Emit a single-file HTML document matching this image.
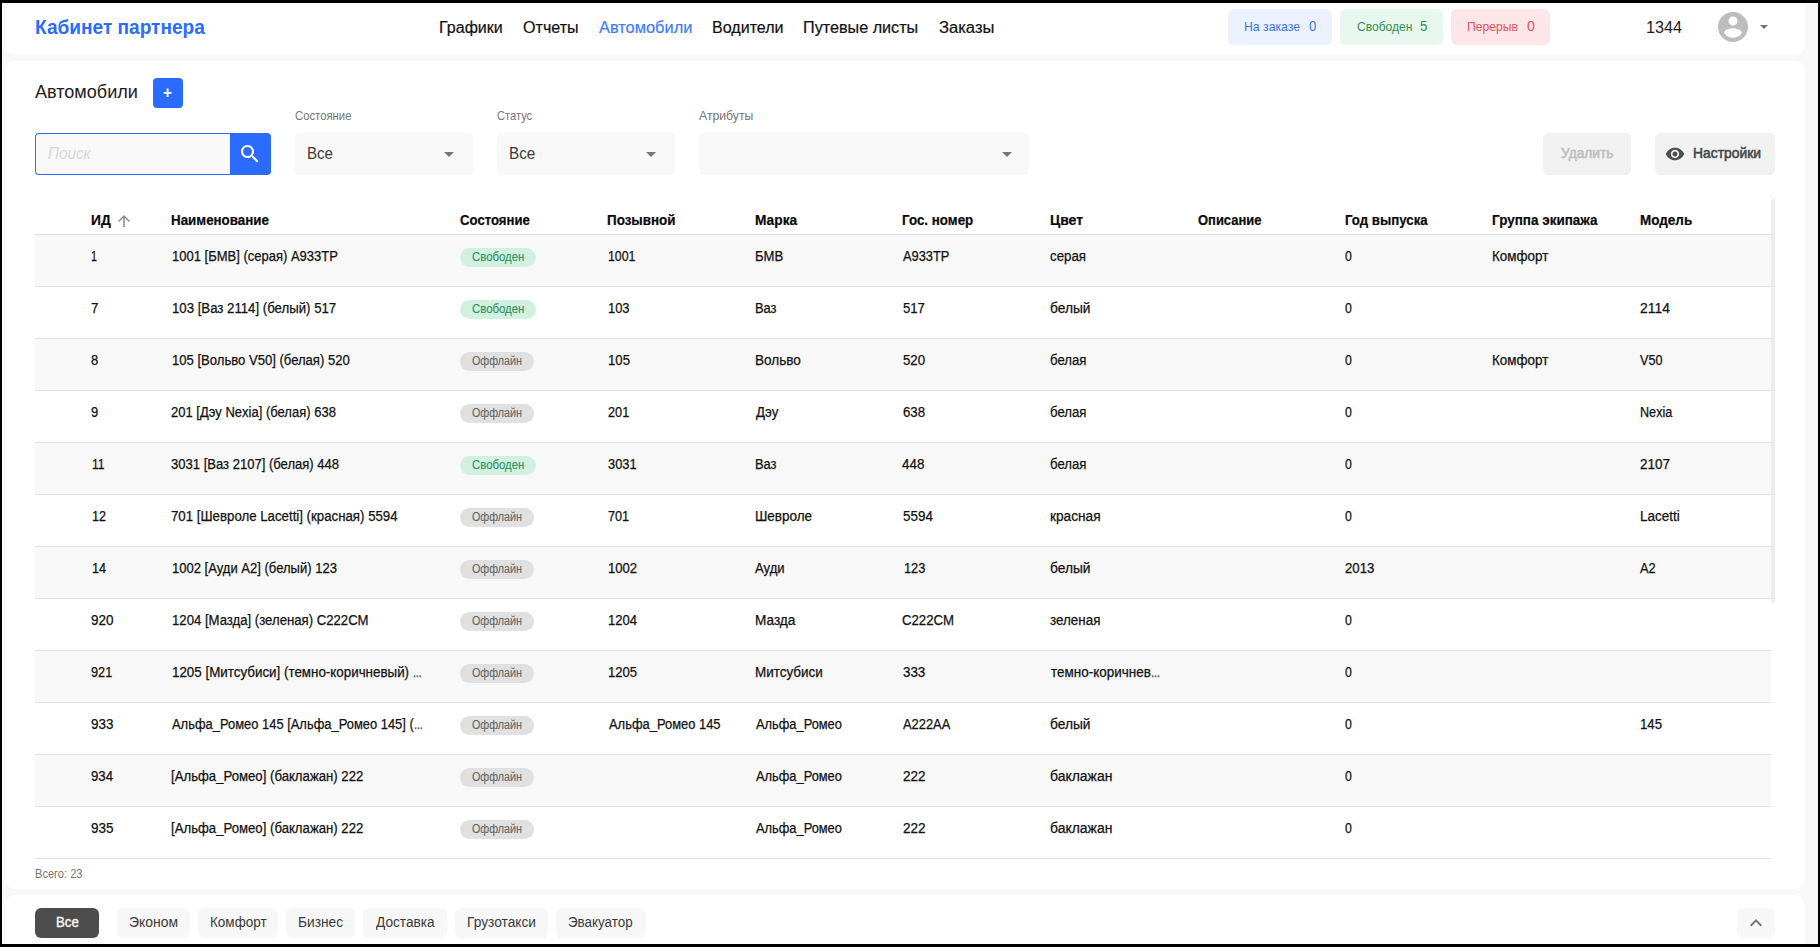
<!DOCTYPE html>
<html lang="ru">
<head>
<meta charset="utf-8">
<title>Кабинет партнера</title>
<style>
*{box-sizing:border-box;margin:0;padding:0}
html,body{width:1820px;height:947px;overflow:hidden;background:#000}
body{font-family:"Liberation Sans",sans-serif;color:#212121;position:relative;-webkit-font-smoothing:antialiased}
.abs{position:absolute}
#vp{position:absolute;left:2px;top:3px;width:1816px;height:941px;background:#f8f8f8;overflow:hidden;border-left:1px solid #fff;border-top:1px solid #fff}
/* all children of #page use page (screenshot) coordinates */
#page{position:absolute;left:-3px;top:-4px;width:1820px;height:947px}
.panel{position:absolute;left:5px;width:1800px;background:#fff}
#hdr{top:3px;height:52px;border-radius:0 0 10px 10px}
#main{top:61px;height:828px;border-radius:10px}
#ftr{top:895px;height:60px;border-radius:10px 10px 0 0}
.t{position:absolute;white-space:nowrap;line-height:1;transform-origin:0 50%}
.logo{left:35px;top:17px;font-size:20px;font-weight:700;color:#2b6cff}
.nav{top:20px;font-size:16px;color:#111;-webkit-text-stroke-width:0.2px}
.nav.act{color:#3d7bff}
.badge{position:absolute;top:9px;height:36px;border-radius:6px}
.badge .t{top:11px;font-size:13px}
.b1{left:1228px;width:104px;background:#ecf1ff;color:#3d73f0}
.b2{left:1340px;width:103px;background:#e8f8ee;color:#2f8f55}
.b3{left:1451px;width:99px;background:#fce6e8;color:#e0525e}
.btnblue{position:absolute;background:#2b6cff;border-radius:4px}
.sel{position:absolute;top:133px;height:42px;background:#f8f8f8;border-radius:4px}
.lbl{top:110px;font-size:12px;color:#757575}
.caret{position:absolute;width:0;height:0;border-left:5px solid transparent;border-right:5px solid transparent;border-top:5px solid #777}
.gbtn{position:absolute;top:133px;height:42px;background:#f1f1f1;border-radius:5px}
#tbl{position:absolute;left:35px;top:199px;width:1736px}
.th{top:213px;font-size:14px;font-weight:700;color:#0a0a0a;-webkit-text-stroke-width:0.2px}
.row{position:absolute;left:35px;width:1736px;height:52px;border-bottom:1px solid #e0e0e0}
.row.odd{background:#f8f8f8}
.row .t{top:14px;font-size:14px;color:#111;-webkit-text-stroke-width:0.25px}
.el{display:inline-block;width:9.5px;transform:scaleX(.68);transform-origin:0 50%}
.pill{position:absolute;left:425px;top:13px;height:19px;border-radius:10px;font-size:12px}
.pill .t{top:3px;font-size:12px}
.pill.free{width:76px;background:#d2f0df}
.pill.free .t{color:#2b9160;left:11px;-webkit-text-stroke-width:0.1px}
.pill.off{width:74px;background:#e0e0e0}
.pill.off .t{color:#666;left:12px;-webkit-text-stroke-width:0.1px}
.chip{position:absolute;top:908px;height:30px;border-radius:6px;background:#f7f7f7}
.chip .t{top:7px;font-size:14px;color:#3a3a3a}
.chip.dark{background:#4d4d4d}
.chip.dark .t{color:#fff;-webkit-text-stroke:0.3px #fff}
</style>
</head>
<body>
<div id="vp"><div id="page">

<div class="panel" id="hdr"></div>
<div class="panel" id="main"></div>
<div class="panel" id="ftr"></div>

<!-- HEADER -->
<div class="t logo" style="margin-left:-0.19px;transform:scaleX(0.9539)">Кабинет партнера</div>
<div class="t nav" style="left:439px;margin-left:-0.13px;transform:scaleX(1.0029)">Графики</div>
<div class="t nav" style="left:523px;margin-left:-0.08px;transform:scaleX(1.0053)">Отчеты</div>
<div class="t nav act" style="left:599px;margin-left:-0.41px;transform:scaleX(1.0247)">Автомобили</div>
<div class="t nav" style="left:712px;margin-left:-0.13px;transform:scaleX(1.0038)">Водители</div>
<div class="t nav" style="left:804px;margin-left:-0.84px;transform:scaleX(1.0110)">Путевые листы</div>
<div class="t nav" style="left:939px;margin-left:0.11px;transform:scaleX(1.0360)">Заказы</div>

<div class="badge b1"><div class="t" style="left:17px;margin-left:-1.20px;transform:scaleX(0.9409)">На заказе</div><div class="t" style="left:81px;font-size:14px;top:10px;margin-left:-0.51px;transform:scaleX(0.9373)">0</div></div>
<div class="badge b2"><div class="t" style="left:16px;margin-left:0.60px;transform:scaleX(0.9254)">Свободен</div><div class="t" style="left:80px;font-size:14px;top:10px;margin-left:-0.19px;transform:scaleX(0.9494)">5</div></div>
<div class="badge b3"><div class="t" style="left:16px;margin-left:0.27px;transform:scaleX(0.9323)">Перерыв</div><div class="t" style="left:75px;font-size:14px;top:10px;margin-left:0.56px;transform:scaleX(1.0116)">0</div></div>

<div class="t" style="left:1646px;top:20px;font-size:16px;color:#1c1c1c;margin-left:-0.31px;transform:scaleX(1.0120)">1344</div>
<svg class="abs" style="left:1715px;top:9px" width="36" height="36" viewBox="0 0 24 24"><path fill="#bdbdbd" d="M12 2C6.48 2 2 6.48 2 12s4.48 10 10 10 10-4.48 10-10S17.52 2 12 2zm0 3c1.66 0 3 1.34 3 3s-1.340 3-3 3-3-1.340-3-3 1.340-3 3-3zm0 14.200c-2.500 0-4.710-1.280-6-3.220.030-1.990 4-3.080 6-3.080 1.990 0 5.970 1.090 6 3.080-1.290 1.940-3.500 3.220-6 3.220z"/></svg>
<div class="caret" style="left:1759.5px;top:25px;border-width:4.5px 4.5px 0 4.5px;border-top-color:#757575"></div>

<!-- TITLE -->
<div class="t" style="left:35px;top:83px;font-size:18px;color:#212121;margin-left:0.29px;transform:scaleX(1.0036)">Автомобили</div>
<div class="btnblue" style="left:153px;top:78px;width:30px;height:30px"><div class="t" style="left:10px;top:7px;font-size:16px;color:#fff;font-weight:700;margin-left:0.45px;transform:scaleX(0.9626)">+</div></div>

<!-- FILTERS -->
<div class="abs" style="left:35px;top:133px;width:197px;height:42px;border:1px solid #2b6cff;border-right:0;border-radius:4px 0 0 4px;background:#f8f8f8"></div>
<div class="t" style="left:48px;top:146px;font-size:16px;font-style:italic;color:#d6d6d6;margin-left:0.20px;transform:scaleX(0.9495)">Поиск</div>
<div class="btnblue" style="left:230px;top:133px;width:41px;height:42px;border-radius:0 4px 4px 0">
<svg class="abs" style="left:8px;top:9px" width="24" height="24" viewBox="0 0 24 24"><path fill="#fff" d="M15.500 14h-.790l-.280-.270C15.410 12.590 16 11.110 16 9.500 16 5.910 13.090 3 9.500 3S3 5.910 3 9.500 5.910 16 9.500 16c1.610 0 3.090-.590 4.230-1.570l.270.280v.790l5 4.990L20.490 19l-4.990-5zm-6 0C7.010 14 5 11.990 5 9.500S7.010 5 9.500 5 14 7.010 14 9.500 11.990 14 9.500 14z"/></svg>
</div>

<div class="t lbl" style="left:295px;margin-left:0.18px;transform:scaleX(0.9422)">Состояние</div>
<div class="sel" style="left:295px;width:178px"><div class="t" style="left:12px;top:13px;font-size:16px;color:#3a3a3a;margin-left:-0.35px;transform:scaleX(0.9426)">Все</div><div class="caret" style="left:149px;top:19px"></div></div>
<div class="t lbl" style="left:497px;margin-left:0.29px;transform:scaleX(0.9263)">Статус</div>
<div class="sel" style="left:497px;width:178px"><div class="t" style="left:12px;top:13px;font-size:16px;color:#3a3a3a;margin-left:-0.36px;transform:scaleX(0.9501)">Все</div><div class="caret" style="left:149px;top:19px"></div></div>
<div class="t lbl" style="left:699px;margin-left:0.24px;transform:scaleX(1.0177)">Атрибуты</div>
<div class="sel" style="left:699px;width:330px"><div class="caret" style="left:302.5px;top:19px"></div></div>

<div class="gbtn" style="left:1543px;width:88px"><div class="t" style="left:18px;top:13px;font-size:14px;color:#bfbfbf;-webkit-text-stroke-width:0.6px;margin-left:-0.03px;transform:scaleX(0.9810)">Удалить</div></div>
<div class="gbtn" style="left:1655px;width:120px">
<svg class="abs" style="left:10px;top:11px" width="20" height="20" viewBox="0 0 24 24"><path fill="#4d4d4d" d="M12 4.500C7 4.500 2.730 7.610 1 12c1.730 4.390 6 7.500 11 7.500s9.270-3.110 11-7.500c-1.730-4.390-6-7.500-11-7.500zM12 17c-2.760 0-5-2.240-5-5s2.240-5 5-5 5 2.240 5 5-2.240 5-5 5zm0-8c-1.660 0-3 1.340-3 3s1.340 3 3 3 3-1.340 3-3-1.340-3-3-3z"/></svg>
<div class="t" style="left:38px;top:13px;font-size:14px;color:#474747;-webkit-text-stroke-width:0.55px;margin-left:0.17px;transform:scaleX(0.9895)">Настройки</div></div>

<!-- TABLE HEAD -->
<div class="abs" style="left:35px;top:234px;width:1736px;height:1px;background:#dcdcdc"></div>
<div class="abs" style="left:1771px;top:199px;width:4px;height:404px;background:#ececec;border-radius:2px"></div>
<div class="t th" style="left:91px;margin-left:0.26px;transform:scaleX(0.9874)">ИД</div>
<svg class="abs" style="left:115px;top:212px" width="18" height="18" viewBox="0 0 24 24"><path fill="#8a8a8a" d="M4 12l1.410 1.410L11 7.830V20h2V7.830l5.580 5.590L20 12l-8-8-8 8z"/></svg>
<div class="t th" style="left:171px;margin-left:0.27px;transform:scaleX(0.9532)">Наименование</div>
<div class="t th" style="left:460px;margin-left:0.09px;transform:scaleX(0.9407)">Состояние</div>
<div class="t th" style="left:607px;margin-left:0.47px;transform:scaleX(0.9573)">Позывной</div>
<div class="t th" style="left:755px;margin-left:0.17px;transform:scaleX(0.9812)">Марка</div>
<div class="t th" style="left:902px;margin-left:0.47px;transform:scaleX(0.9533)">Гос. номер</div>
<div class="t th" style="left:1050px;margin-left:0.16px;transform:scaleX(0.9985)">Цвет</div>
<div class="t th" style="left:1197px;margin-left:0.59px;transform:scaleX(0.9254)">Описание</div>
<div class="t th" style="left:1344px;margin-left:1.07px;transform:scaleX(0.9454)">Год выпуска</div>
<div class="t th" style="left:1492px;margin-left:0.47px;transform:scaleX(0.9627)">Группа экипажа</div>
<div class="t th" style="left:1639px;margin-left:0.57px;transform:scaleX(0.9630)">Модель</div>

<!-- ROWS -->
<div class="row odd" style="top:235px"><div class="t" style="left:56px;margin-left:0.18px;transform:scaleX(0.7607)">1</div><div class="t" style="left:136px;margin-left:0.63px;transform:scaleX(0.9289)">1001 [БМВ] (серая) А933ТР</div><div class="pill free"><div class="t" style="margin-left:1.01px;transform:scaleX(0.9496)">Свободен</div></div><div class="t" style="left:572px;margin-left:1.44px;transform:scaleX(0.8823)">1001</div><div class="t" style="left:720px;margin-left:0.42px;transform:scaleX(0.9369)">БМВ</div><div class="t" style="left:867px;margin-left:1.28px;transform:scaleX(0.9180)">А933ТР</div><div class="t" style="left:1015px;margin-left:-0.11px;transform:scaleX(0.9470)">серая</div><div class="t" style="left:1309px;margin-left:1.22px;transform:scaleX(0.8790)">0</div><div class="t" style="left:1457px;margin-left:0.41px;transform:scaleX(0.9601)">Комфорт</div></div>
<div class="row" style="top:287px"><div class="t" style="left:56px;margin-left:0.28px;transform:scaleX(0.9510)">7</div><div class="t" style="left:136px;margin-left:0.63px;transform:scaleX(0.9429)">103 [Ваз 2114] (белый) 517</div><div class="pill free"><div class="t" style="margin-left:1.01px;transform:scaleX(0.9496)">Свободен</div></div><div class="t" style="left:572px;margin-left:1.43px;transform:scaleX(0.9223)">103</div><div class="t" style="left:720px;margin-left:0.32px;transform:scaleX(0.9200)">Ваз</div><div class="t" style="left:867px;margin-left:1.03px;transform:scaleX(0.9351)">517</div><div class="t" style="left:1015px;margin-left:-0.17px;transform:scaleX(0.9822)">белый</div><div class="t" style="left:1309px;margin-left:1.22px;transform:scaleX(0.8793)">0</div><div class="t" style="left:1604px;margin-left:0.57px;transform:scaleX(0.9921)">2114</div></div>
<div class="row odd" style="top:339px"><div class="t" style="left:56px;margin-left:0.29px;transform:scaleX(0.9250)">8</div><div class="t" style="left:136px;margin-left:0.63px;transform:scaleX(0.9337)">105 [Вольво V50] (белая) 520</div><div class="pill off"><div class="t" style="margin-left:0.12px;transform:scaleX(0.8968)">Оффлайн</div></div><div class="t" style="left:572px;margin-left:1.43px;transform:scaleX(0.9400)">105</div><div class="t" style="left:720px;margin-left:0.41px;transform:scaleX(0.9666)">Вольво</div><div class="t" style="left:867px;margin-left:1.03px;transform:scaleX(0.9437)">520</div><div class="t" style="left:1015px;margin-left:-0.17px;transform:scaleX(0.9421)">белая</div><div class="t" style="left:1309px;margin-left:1.22px;transform:scaleX(0.8790)">0</div><div class="t" style="left:1457px;margin-left:0.41px;transform:scaleX(0.9601)">Комфорт</div><div class="t" style="left:1604px;margin-left:1.31px;transform:scaleX(0.9018)">V50</div></div>
<div class="row" style="top:391px"><div class="t" style="left:56px;margin-left:0.27px;transform:scaleX(0.9287)">9</div><div class="t" style="left:136px;margin-left:0.28px;transform:scaleX(0.9287)">201 [Дэу Nexia] (белая) 638</div><div class="pill off"><div class="t" style="margin-left:0.12px;transform:scaleX(0.8968)">Оффлайн</div></div><div class="t" style="left:572px;margin-left:0.68px;transform:scaleX(0.9073)">201</div><div class="t" style="left:720px;margin-left:0.76px;transform:scaleX(0.9455)">Дэу</div><div class="t" style="left:867px;margin-left:0.86px;transform:scaleX(0.9433)">638</div><div class="t" style="left:1015px;margin-left:-0.16px;transform:scaleX(0.9420)">белая</div><div class="t" style="left:1309px;margin-left:1.22px;transform:scaleX(0.8793)">0</div><div class="t" style="left:1604px;margin-left:1.03px;transform:scaleX(0.9022)">Nexia</div></div>
<div class="row odd" style="top:443px"><div class="t" style="left:56px;margin-left:0.85px;transform:scaleX(0.8676)">11</div><div class="t" style="left:136px;margin-left:0.28px;transform:scaleX(0.9316)">3031 [Ваз 2107] (белая) 448</div><div class="pill free"><div class="t" style="margin-left:1.01px;transform:scaleX(0.9496)">Свободен</div></div><div class="t" style="left:572px;margin-left:0.88px;transform:scaleX(0.9166)">3031</div><div class="t" style="left:720px;margin-left:0.32px;transform:scaleX(0.9200)">Ваз</div><div class="t" style="left:867px;margin-left:0.48px;transform:scaleX(0.9601)">448</div><div class="t" style="left:1015px;margin-left:-0.17px;transform:scaleX(0.9421)">белая</div><div class="t" style="left:1309px;margin-left:1.22px;transform:scaleX(0.8790)">0</div><div class="t" style="left:1604px;margin-left:0.57px;transform:scaleX(0.9621)">2107</div></div>
<div class="row" style="top:495px"><div class="t" style="left:56px;margin-left:0.84px;transform:scaleX(0.8971)">12</div><div class="t" style="left:136px;margin-left:0.28px;transform:scaleX(0.9462)">701 [Шевроле Lacetti] (красная) 5594</div><div class="pill off"><div class="t" style="margin-left:0.12px;transform:scaleX(0.8968)">Оффлайн</div></div><div class="t" style="left:572px;margin-left:0.89px;transform:scaleX(0.9069)">701</div><div class="t" style="left:720px;margin-left:0.21px;transform:scaleX(0.9632)">Шевроле</div><div class="t" style="left:867px;margin-left:0.53px;transform:scaleX(0.9582)">5594</div><div class="t" style="left:1015px;margin-left:-0.11px;transform:scaleX(0.9768)">красная</div><div class="t" style="left:1309px;margin-left:1.22px;transform:scaleX(0.8793)">0</div><div class="t" style="left:1604px;margin-left:1.11px;transform:scaleX(0.9625)">Lacetti</div></div>
<div class="row odd" style="top:547px"><div class="t" style="left:56px;margin-left:0.84px;transform:scaleX(0.9079)">14</div><div class="t" style="left:136px;margin-left:1.03px;transform:scaleX(0.9306)">1002 [Ауди A2] (белый) 123</div><div class="pill off"><div class="t" style="margin-left:0.12px;transform:scaleX(0.8968)">Оффлайн</div></div><div class="t" style="left:572px;margin-left:1.43px;transform:scaleX(0.9350)">1002</div><div class="t" style="left:720px;margin-left:0.39px;transform:scaleX(0.9341)">Ауди</div><div class="t" style="left:867px;margin-left:1.54px;transform:scaleX(0.9134)">123</div><div class="t" style="left:1015px;margin-left:-0.17px;transform:scaleX(0.9822)">белый</div><div class="t" style="left:1309px;margin-left:1.18px;transform:scaleX(0.9427)">2013</div><div class="t" style="left:1604px;margin-left:1.28px;transform:scaleX(0.9193)">A2</div></div>
<div class="row" style="top:599px"><div class="t" style="left:56px;margin-left:0.27px;transform:scaleX(0.9639)">920</div><div class="t" style="left:136px;margin-left:1.03px;transform:scaleX(0.9392)">1204 [Мазда] (зеленая) С222СМ</div><div class="pill off"><div class="t" style="margin-left:0.12px;transform:scaleX(0.8968)">Оффлайн</div></div><div class="t" style="left:572px;margin-left:1.43px;transform:scaleX(0.9322)">1204</div><div class="t" style="left:720px;margin-left:0.21px;transform:scaleX(0.9730)">Мазда</div><div class="t" style="left:867px;margin-left:0.36px;transform:scaleX(0.9429)">С222СМ</div><div class="t" style="left:1015px;margin-left:0.21px;transform:scaleX(0.9582)">зеленая</div><div class="t" style="left:1309px;margin-left:1.22px;transform:scaleX(0.8793)">0</div></div>
<div class="row odd" style="top:651px"><div class="t" style="left:56px;margin-left:0.27px;transform:scaleX(0.9075)">921</div><div class="t" style="left:136px;margin-left:1.02px;transform:scaleX(0.9550)">1205 [Митсубиси] (темно-коричневый) <span class="el">…</span></div><div class="pill off"><div class="t" style="margin-left:0.12px;transform:scaleX(0.8968)">Оффлайн</div></div><div class="t" style="left:572px;margin-left:1.43px;transform:scaleX(0.9342)">1205</div><div class="t" style="left:720px;margin-left:0.21px;transform:scaleX(0.9618)">Митсубиси</div><div class="t" style="left:867px;margin-left:0.58px;transform:scaleX(0.9550)">333</div><div class="t" style="left:1015px;margin-left:0.74px;transform:scaleX(0.9623)">темно-коричнев<span class="el">…</span></div><div class="t" style="left:1309px;margin-left:1.22px;transform:scaleX(0.8790)">0</div></div>
<div class="row" style="top:703px"><div class="t" style="left:56px;margin-left:0.27px;transform:scaleX(0.9556)">933</div><div class="t" style="left:136px;margin-left:0.99px;transform:scaleX(0.9232)">Альфа_Ромео 145 [Альфа_Ромео 145] (<span class="el">…</span></div><div class="pill off"><div class="t" style="margin-left:0.12px;transform:scaleX(0.8968)">Оффлайн</div></div><div class="t" style="left:572px;margin-left:1.59px;transform:scaleX(0.9230)">Альфа_Ромео 145</div><div class="t" style="left:720px;margin-left:0.88px;transform:scaleX(0.9178)">Альфа_Ромео</div><div class="t" style="left:867px;margin-left:1.08px;transform:scaleX(0.9195)">А222АА</div><div class="t" style="left:1015px;margin-left:-0.17px;transform:scaleX(0.9822)">белый</div><div class="t" style="left:1309px;margin-left:1.22px;transform:scaleX(0.8793)">0</div><div class="t" style="left:1604px;margin-left:1.43px;transform:scaleX(0.9444)">145</div></div>
<div class="row odd" style="top:755px"><div class="t" style="left:56px;margin-left:0.27px;transform:scaleX(0.9419)">934</div><div class="t" style="left:136px;margin-left:0.18px;transform:scaleX(0.9406)">[Альфа_Ромео] (баклажан) 222</div><div class="pill off"><div class="t" style="margin-left:0.12px;transform:scaleX(0.8968)">Оффлайн</div></div><div class="t" style="left:720px;margin-left:0.88px;transform:scaleX(0.9178)">Альфа_Ромео</div><div class="t" style="left:867px;margin-left:0.57px;transform:scaleX(0.9642)">222</div><div class="t" style="left:1015px;margin-left:-0.07px;transform:scaleX(0.9957)">баклажан</div><div class="t" style="left:1309px;margin-left:1.22px;transform:scaleX(0.8790)">0</div></div>
<div class="row" style="top:807px"><div class="t" style="left:56px;margin-left:0.27px;transform:scaleX(0.9645)">935</div><div class="t" style="left:136px;margin-left:0.18px;transform:scaleX(0.9406)">[Альфа_Ромео] (баклажан) 222</div><div class="pill off"><div class="t" style="margin-left:0.12px;transform:scaleX(0.8968)">Оффлайн</div></div><div class="t" style="left:720px;margin-left:0.88px;transform:scaleX(0.9178)">Альфа_Ромео</div><div class="t" style="left:867px;margin-left:0.57px;transform:scaleX(0.9643)">222</div><div class="t" style="left:1015px;margin-left:-0.07px;transform:scaleX(0.9956)">баклажан</div><div class="t" style="left:1309px;margin-left:1.22px;transform:scaleX(0.8793)">0</div></div>

<!-- FOOTER -->
<div class="t" style="left:35px;top:868px;font-size:12px;color:#757575;margin-left:0.01px;transform:scaleX(0.9218)">Всего: 23</div>

<div class="chip dark" style="left:35px;width:64px"><div class="t" style="left:20px;margin-left:0.97px;transform:scaleX(0.9454)">Все</div></div>
<div class="chip" style="left:117px;width:73px"><div class="t" style="left:12px;margin-left:0.30px;transform:scaleX(0.9960)">Эконом</div></div>
<div class="chip" style="left:198px;width:80px"><div class="t" style="left:12px;margin-left:-0.46px;transform:scaleX(0.9639)">Комфорт</div></div>
<div class="chip" style="left:286px;width:69px"><div class="t" style="left:12px;margin-left:0.02px;transform:scaleX(0.9796)">Бизнес</div></div>
<div class="chip" style="left:363px;width:84px"><div class="t" style="left:12px;margin-left:0.83px;transform:scaleX(0.9753)">Доставка</div></div>
<div class="chip" style="left:455px;width:93px"><div class="t" style="left:12px;margin-left:-0.28px;transform:scaleX(0.9817)">Грузотакси</div></div>
<div class="chip" style="left:556px;width:90px"><div class="t" style="left:12px;margin-left:0.32px;transform:scaleX(0.9562)">Эвакуатор</div></div>
<div class="chip" style="left:1737px;width:38px"><svg class="abs" style="left:7px;top:3px" width="24" height="24" viewBox="0 0 24 24"><path fill="#757575" d="M7.410 15.410L12 10.830l4.590 4.580L18 14l-6-6-6 6z"/></svg></div>

</div></div>
</body>
</html>
